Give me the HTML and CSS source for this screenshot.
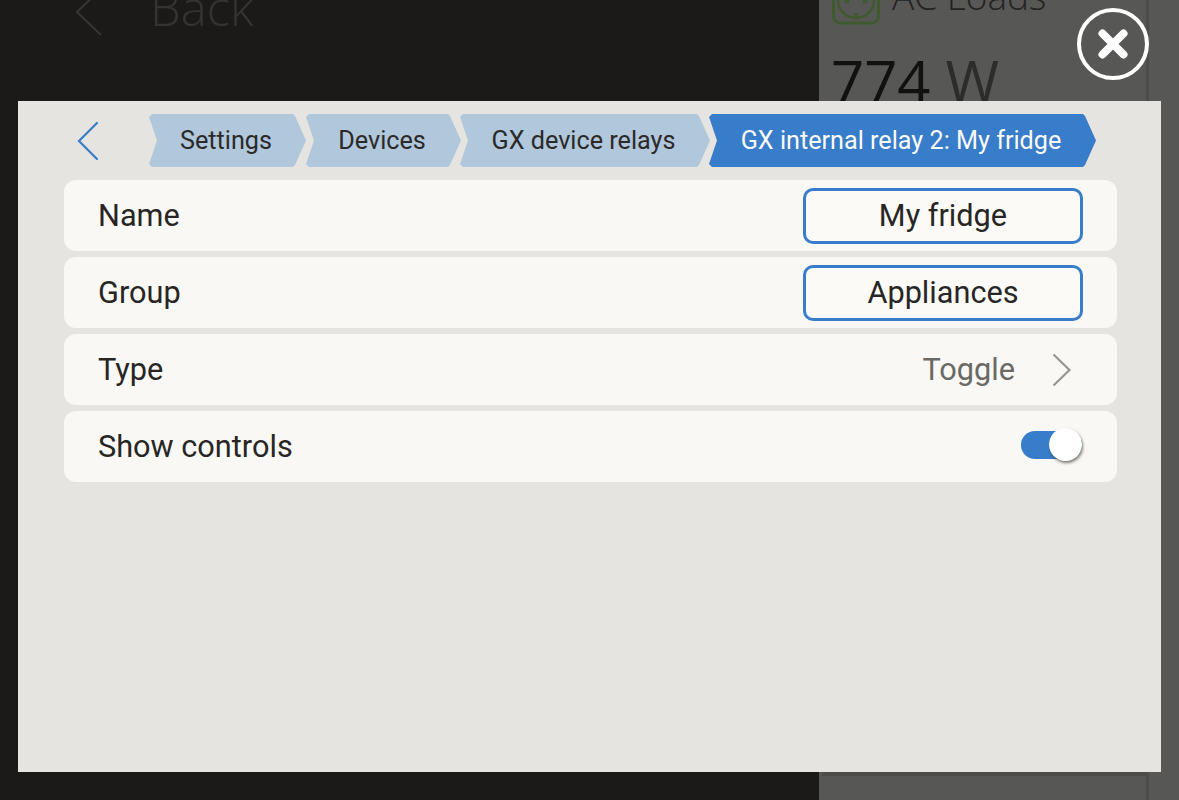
FILE: index.html
```html
<!DOCTYPE html>
<html lang="en">
<head>
<meta charset="utf-8">
<title>GX internal relay 2: My fridge</title>
<link rel="stylesheet" href="styles.css">
</head>
<body>
<div class="screen">
  <div class="bg-header">
    <svg class="bg-back-icon" width="30" height="50" viewBox="0 0 30 50"><path d="M26 1 2 24 26 47" fill="none" stroke="#353533" stroke-width="2"/></svg>
    <span class="bg-back-text">Back</span>
  </div>
  <div class="bg-panel">
    <div class="bg-panel-line"></div>
    <svg class="bg-plug" width="48" height="26" viewBox="0 0 48 26"><rect x="1.500" y="-22" width="45" height="45" rx="7" fill="none" stroke="#3f5a2c" stroke-width="3"/><circle cx="24" cy="0" r="18" fill="none" stroke="#3f5a2c" stroke-width="2.500"/><circle cx="15" cy="1" r="2.500" fill="#3f5a2c"/><circle cx="33" cy="1" r="2.500" fill="#3f5a2c"/><rect x="22.500" y="13" width="3" height="5" fill="#3f5a2c"/></svg>
    <span class="bg-title-text">AC Loads</span>
    <div class="bg-value"><span class="bg-num">774</span> <span class="bg-unit">W</span></div>
  </div>

  <button class="close" type="button" aria-label="Close">
    <svg width="30" height="30" viewBox="0 0 30 30"><path d="M4.500 4.500 25.500 25.500M25.500 4.500 4.500 25.500" stroke="#fff" stroke-width="8" stroke-linecap="round"/></svg>
  </button>

  <section class="dialog">
    <nav class="crumbbar">
      <svg class="nav-back" width="24" height="40" viewBox="0 0 24 40"><path d="M21 2 3 20l18 18" fill="none" stroke="#387dc5" stroke-width="2.200" stroke-linecap="round"/></svg>
      <div class="crumbs">
        <a class="crumb first">Settings</a>
        <a class="crumb second">Devices</a>
        <a class="crumb third">GX device relays</a>
        <a class="crumb current">GX internal relay 2: My fridge</a>
      </div>
    </nav>
    <div class="rows">
      <div class="row"><span class="label">Name</span><span class="field">My fridge</span></div>
      <div class="row"><span class="label">Group</span><span class="field">Appliances</span></div>
      <div class="row"><span class="label">Type</span>
        <span class="nav-value">Toggle
          <svg width="22" height="34" viewBox="0 0 22 34"><path d="M2.500 1.500 18.500 17 2.500 32.500" fill="none" stroke="#969592" stroke-width="2.200"/></svg>
        </span>
      </div>
      <div class="row"><span class="label">Show controls</span><span class="switch"><span class="knob"></span></span></div>
    </div>
  </section>
</div>
</body>
</html>
```
FILE: styles.css
```css
* { box-sizing: border-box; }
html, body { margin: 0; padding: 0; }
body { width: 1179px; height: 800px; overflow: hidden; background: #1b1a19; font-family: Roboto, "Liberation Sans", sans-serif; }
.screen { position: relative; width: 1179px; height: 800px; overflow: hidden; }

.bg-header { position: absolute; left: 75px; top: -12px; display: flex; align-items: flex-start; gap: 45px; color: #333331; }
.bg-back-text { margin-top: -3px; font-family: "Open Sans", sans-serif; font-weight: 300; font-size: 49px; line-height: 44px; }

.bg-panel { position: absolute; left: 819px; top: 0; width: 360px; height: 800px; background: #575756; }
.bg-panel-line { position: absolute; left: 327px; top: 0; width: 3px; height: 800px; background: #4c4c4a; }
.bg-panel-line::after { content: ""; position: absolute; right: 0; top: 772px; width: 327px; height: 4px; background: #4c4c4a; }
.bg-plug { position: absolute; left: 13px; top: 0; }
.bg-title-text { position: absolute; left: 73px; top: -24px; font-family: "Open Sans", sans-serif; font-weight: 300; font-size: 37px; line-height: 40px; color: #232322; white-space: nowrap; }
.bg-value { position: absolute; left: 12px; top: 46px; font-family: "Open Sans", sans-serif; font-weight: 400; font-size: 58px; line-height: 70px; color: #111110; white-space: nowrap; }
.bg-unit { color: #2c2c2b; }

.close { position: absolute; left: 1077px; top: 8px; width: 72px; height: 72px; padding: 0; border: 4px solid #fff; border-radius: 50%; background: #575756; display: flex; align-items: center; justify-content: center; }

.dialog { position: absolute; left: 18px; top: 101px; width: 1143px; height: 671px; background: #e5e4e0; padding: 13px 44px 0 46px; display: flex; flex-direction: column; }

.crumbbar { height: 53px; display: flex; align-items: center; position: relative; }
.nav-back { position: absolute; left: 12px; top: 7px; }
.crumbs { margin-left: 85px; display: flex; align-items: stretch; height: 53px; }
.crumb { display: flex; align-items: center; justify-content: center; height: 53px; font-size: 25.200px; color: #2b2a29; background: #b0c7dc;
  clip-path: polygon(3px 0, calc(100% - 13px) 0, calc(100% - 11px) 2px, 100% 50%, calc(100% - 11px) calc(100% - 2px), calc(100% - 13px) 100%, 3px 100%, 0 calc(100% - 3px), 8px 50%, 0 3px);
  white-space: nowrap; padding: 0 3px 0 0; }
.crumb.first { width: 157px; }
.crumb.second { width: 155px; }
.crumb.third { width: 250px; margin-left: -1px; }
.crumb.current { width: 387px; margin-left: -1px; background: #387dc9; color: #fbfaf7; }

.rows { margin-top: 13px; display: flex; flex-direction: column; gap: 6px; }
.row { height: 71px; background: #f9f8f4; border-radius: 12px; padding: 0 34px; display: flex; align-items: center; justify-content: space-between; font-size: 30.700px; color: #272625; }
.field { width: 280px; height: 56px; border: 3px solid #387dc9; border-radius: 10px; display: flex; align-items: center; justify-content: center; background: #fbfaf7; }
.nav-value { display: flex; align-items: center; gap: 36px; color: #6a6966; margin-right: 10px; line-height: 34px; }
.switch { position: relative; width: 61px; height: 28px; border-radius: 14px; background: #387dc9; margin: 0 1px 4px 0; }
.knob { position: absolute; right: 0; top: -3px; width: 33px; height: 33px; border-radius: 50%; background: #fff; box-shadow: 1px 2px 3px rgba(0,0,0,.5); }
```
